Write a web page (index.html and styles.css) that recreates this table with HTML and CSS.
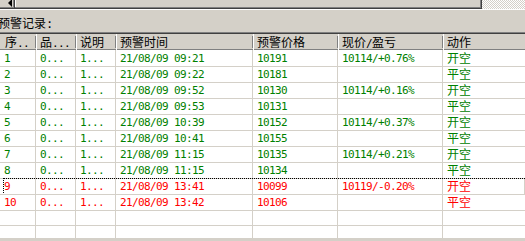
FILE: index.html
```html
<!DOCTYPE html>
<html>
<head>
<meta charset="utf-8">
<link rel="stylesheet" href="styles.css">
</head>
<body>
<div class="hscroll">
  <div class="sb-btn"><span class="arrow"></span></div>
  <div class="thumb"></div>
  <div class="track"></div>
</div>
<div class="panel">
  <div class="label">预警记录<span class="m">:</span></div>
  <div class="list">
    <div class="list-inner">
      <div class="row head">
        <div class="hc">序<span class="m">..</span></div>
        <div class="hc">品<span class="m">...</span></div>
        <div class="hc">说明</div>
        <div class="hc">预警时间</div>
        <div class="hc">预警价格</div>
        <div class="hc">现价<span class="m">/</span>盈亏</div>
        <div class="hc">动作</div>
      </div>
      <div class="row g"><div class="c m">1</div><div class="c m">0...</div><div class="c m">1...</div><div class="c m">21/08/09 09:21</div><div class="c m">10191</div><div class="c m">10114/+0.76%</div><div class="c">开空</div></div>
      <div class="row g"><div class="c m">2</div><div class="c m">0...</div><div class="c m">1...</div><div class="c m">21/08/09 09:22</div><div class="c m">10181</div><div class="c m"></div><div class="c">平空</div></div>
      <div class="row g"><div class="c m">3</div><div class="c m">0...</div><div class="c m">1...</div><div class="c m">21/08/09 09:52</div><div class="c m">10130</div><div class="c m">10114/+0.16%</div><div class="c">开空</div></div>
      <div class="row g"><div class="c m">4</div><div class="c m">0...</div><div class="c m">1...</div><div class="c m">21/08/09 09:53</div><div class="c m">10131</div><div class="c m"></div><div class="c">平空</div></div>
      <div class="row g"><div class="c m">5</div><div class="c m">0...</div><div class="c m">1...</div><div class="c m">21/08/09 10:39</div><div class="c m">10152</div><div class="c m">10114/+0.37%</div><div class="c">开空</div></div>
      <div class="row g"><div class="c m">6</div><div class="c m">0...</div><div class="c m">1...</div><div class="c m">21/08/09 10:41</div><div class="c m">10155</div><div class="c m"></div><div class="c">平空</div></div>
      <div class="row g"><div class="c m">7</div><div class="c m">0...</div><div class="c m">1...</div><div class="c m">21/08/09 11:15</div><div class="c m">10135</div><div class="c m">10114/+0.21%</div><div class="c">开空</div></div>
      <div class="row g"><div class="c m">8</div><div class="c m">0...</div><div class="c m">1...</div><div class="c m">21/08/09 11:15</div><div class="c m">10134</div><div class="c m"></div><div class="c">平空</div></div>
      <div class="row r focus"><div class="c m">9</div><div class="c m">0...</div><div class="c m">1...</div><div class="c m">21/08/09 13:41</div><div class="c m">10099</div><div class="c m">10119/-0.20%</div><div class="c">开空</div><div class="focus-rect"></div></div>
      <div class="row r"><div class="c m">10</div><div class="c m">0...</div><div class="c m">1...</div><div class="c m">21/08/09 13:42</div><div class="c m">10106</div><div class="c m"></div><div class="c">平空</div></div>
      <div class="row"><div class="c"></div><div class="c"></div><div class="c"></div><div class="c"></div><div class="c"></div><div class="c"></div><div class="c"></div></div>
      <div class="row"><div class="c"></div><div class="c"></div><div class="c"></div><div class="c"></div><div class="c"></div><div class="c"></div><div class="c"></div></div>
    </div>
  </div>
</div>
</body>
</html>
```
FILE: styles.css
```css
* { box-sizing: border-box; margin: 0; padding: 0; }
html, body { width: 525px; height: 241px; overflow: hidden; }
body {
  background: #d4d0c8;
  font: 12px "Noto Sans CJK SC", sans-serif;
  color: #000;
}
.m {
  font-family: "DejaVu Sans Mono", monospace;
  font-size: 11px;
  letter-spacing: -0.62px;
}
.hscroll { display: flex; height: 9px; }
.sb-btn {
  width: 15px;
  border-right: 1px solid #404040;
  border-bottom: 1px solid #404040;
  box-shadow: inset -1px -1px #808080;
  display: flex;
  align-items: center;
  justify-content: flex-end;
  padding-right: 2px;
}
.arrow {
  width: 0; height: 0;
  border-right: 4px solid #000;
  border-top: 4px solid transparent;
  border-bottom: 4px solid transparent;
  margin-top: -3px;
}
.thumb {
  width: 467px;
  border-right: 1px solid #404040;
  border-bottom: 1px solid #404040;
  box-shadow: inset -1px -1px #808080, inset 1px 0 #fff;
}
.track {
  flex: 1;
  background: repeating-conic-gradient(#fff 0 25%, #d4d0c8 0 50%) 0 0 / 2px 2px;
}
.panel { border-top: 1px solid #fff; }
.label { margin: 7px 0 0 -2px; height: 12px; line-height: 12px; }
.label .m { font-size: 12px; }
.list {
  margin-top: 3px;
  height: 206px;
  overflow: hidden;
  border-top: 1px solid #808080;
  background: #fff;
}
.list-inner { border-top: 1px solid #404040; }
.row {
  display: grid;
  grid-template-columns: 36px 40px 40px 137px 85px 105px 1fr;
  height: 16px;
  position: relative;
}
.head {
  background: #d4d0c8;
  border-bottom: 1px solid #808080;
}
.hc {
  padding-left: 4px;
  line-height: 15px;
  white-space: nowrap;
  background:
    linear-gradient(#808080, #808080) right 0 top 2px / 1px 12px no-repeat;
  box-shadow: inset 1px 0 #fff;
}
.hc:first-child { padding-left: 5px; box-shadow: none; }
.hc:last-child { background: none; }
.c {
  padding: 1px 0 0 4px;
  line-height: 14px;
  white-space: nowrap;
  border-right: 1px solid #d4d0c8;
  border-bottom: 1px solid #d4d0c8;
}
.c.m { padding-top: 2px; }
.c:last-child { border-right: none; }
.g { color: #008000; }
.r { color: #ff0000; }
.focus-rect {
  position: absolute;
  left: 3px; top: 0; right: 0; height: 15px;
  border-top: 1px dotted #000;
  border-left: 1px dotted #000;
  pointer-events: none;
}
```
